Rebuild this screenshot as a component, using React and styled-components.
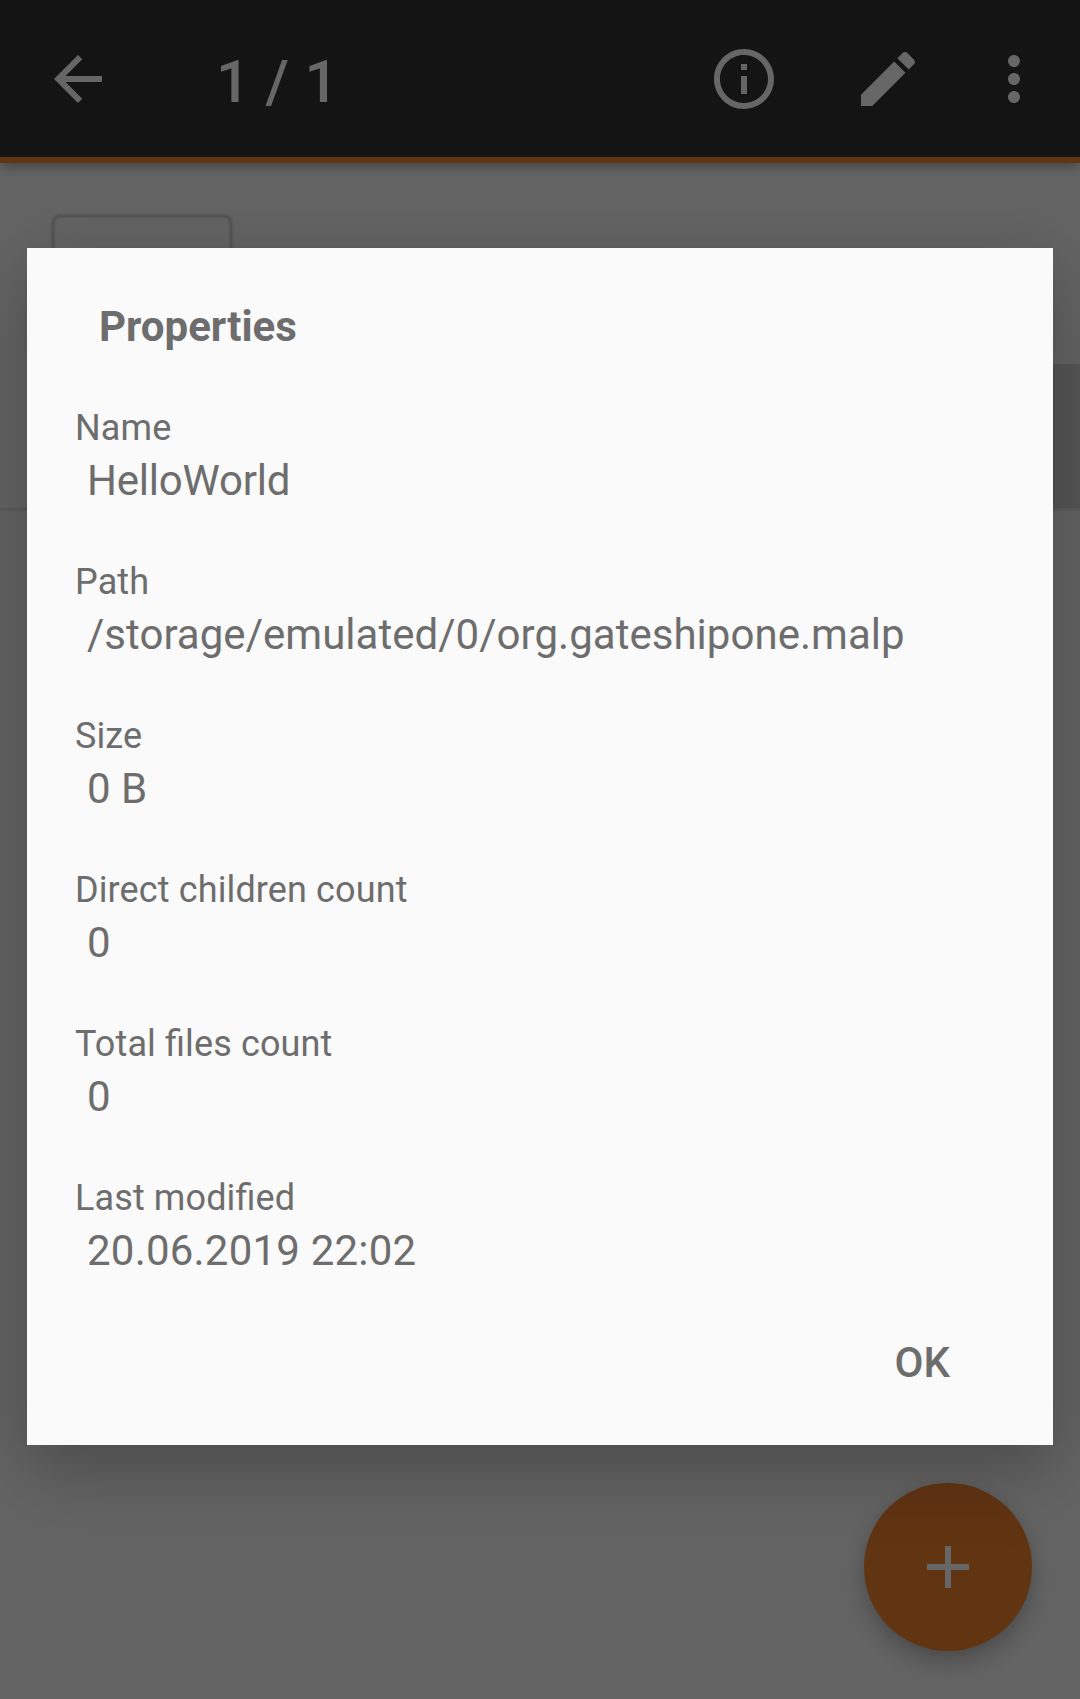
import React from "react";
import styled, { createGlobalStyle } from "styled-components";

const GlobalStyle = createGlobalStyle`
  *, *::before, *::after { box-sizing: border-box; }
  html, body { margin: 0; padding: 0; }
  body { font-family: Roboto, "Noto Sans", sans-serif; overflow: hidden; }
  button { font: inherit; border: 0; padding: 0; background: none; color: inherit; display: flex; }
`;

const Screen = styled.div`
  position: relative;
  width: 1080px;
  height: 1699px;
  background: #fafafa;
  overflow: hidden;
  display: flex;
  flex-direction: column;
`;

const AppBar = styled.header`
  flex: none;
  height: 163px;
  padding: 1px 12px 0 42px;
  display: flex;
  align-items: center;
  background: #323232;
  border-bottom: 6px solid #f2822f;
  box-shadow: 0 4px 12px rgba(0, 0, 0, 0.32);
  color: #fff;
`;

const BarTitle = styled.h1`
  flex: 1;
  margin: 0 0 0 102px;
  font-size: 60px;
  font-weight: 500;
  line-height: 70px;
  letter-spacing: 0.3px;
  padding-top: 5px;
`;

const Actions = styled.nav`
  display: flex;
`;

const ActionButton = styled.button`
  justify-content: center;
  width: ${(p) => p.$width}px;
`;

const Icon = styled.svg`
  display: block;
  flex: none;
  width: 72px;
  height: 72px;
  fill: currentColor;
`;

const FileRow = styled.section`
  flex: none;
  height: 348px;
  padding-left: 52px;
  display: flex;
  justify-content: space-between;
  align-items: flex-end;
  border-bottom: 3px solid #e8e8e8;
`;

const Thumbnail = styled.div`
  align-self: flex-start;
  width: 180px;
  height: 180px;
  margin-top: 52px;
  border: 2px solid #d2d2d2;
  border-radius: 8px;
  box-shadow: 0 0 3px rgba(0, 0, 0, 0.22), inset 0 0 3px rgba(0, 0, 0, 0.2);
`;

const RowAction = styled.div`
  width: 144px;
  height: 144px;
  background: #d6d6d6;
`;

const Fab = styled.button`
  position: absolute;
  right: 48px;
  bottom: 48px;
  width: 168px;
  height: 168px;
  border-radius: 50%;
  align-items: center;
  justify-content: center;
  background: #f2822f;
  color: #fff;
  box-shadow: 0 12px 26px rgba(0, 0, 0, 0.24), 0 0 12px rgba(0, 0, 0, 0.06);
`;

const Scrim = styled.div`
  position: absolute;
  inset: 0;
  padding: 248px 27px 0;
  background: rgba(0, 0, 0, 0.6);
`;

const Dialog = styled.div`
  height: 1197px;
  padding: 64px 48px 0;
  background: #fafafa;
  color: #6d6d6d;
  box-shadow: 0 28px 68px rgba(0, 0, 0, 0.22), 0 0 50px rgba(0, 0, 0, 0.05);
  display: flex;
  flex-direction: column;
`;

const DialogTitle = styled.h2`
  margin: 0 0 0 24px;
  height: 92px;
  font-size: 42px;
  font-weight: 700;
  line-height: 30px;
`;

const Properties = styled.dl`
  margin: 0;
  display: flex;
  flex-direction: column;
  gap: 49px;
`;

const Label = styled.dt`
  font-size: 36px;
  line-height: 48px;
  letter-spacing: 0.12px;
  font-feature-settings: "liga" 1;
`;

const Value = styled.dd`
  margin: 0 0 0 12px;
  padding-top: 1px;
  font-size: 42px;
  line-height: 56px;
  letter-spacing: ${(p) => p.$tracking}px;
  white-space: nowrap;
`;

const DialogActions = styled.div`
  display: flex;
  justify-content: flex-end;
  margin-top: 56px;
  padding-right: 55px;
`;

const DialogButton = styled.button`
  font-size: 42px;
  font-weight: 500;
  line-height: 56px;
`;

const PROPERTIES = [
  { label: "Name", value: "HelloWorld", tracking: -0.2 },
  { label: "Path", value: "/storage/emulated/0/org.gateshipone.malp", tracking: 0.03 },
  { label: "Size", value: "0 B", tracking: 0 },
  { label: "Direct children count", value: "0", tracking: 0 },
  { label: "Total files count", value: "0", tracking: 0 },
  { label: "Last modified", value: "20.06.2019 22:02", tracking: 0.21 },
];

const PATHS = {
  back: "M20 11H7.83l5.59-5.59L12 4l-8 8 8 8 1.41-1.41L7.83 13H20v-2z",
  info: "M11 17h2v-6h-2v6zm1-15C6.48 2 2 6.48 2 12s4.48 10 10 10 10-4.48 10-10S17.52 2 12 2zm0 18c-4.41 0-8-3.59-8-8s3.59-8 8-8 8 3.59 8 8-3.59 8-8 8zM11 9h2V7h-2v2z",
  edit: "M3 17.25V21h3.75L17.81 9.94l-3.75-3.75L3 17.25zM20.71 7.04c.39-.39.39-1.02 0-1.41l-2.34-2.34c-.39-.39-1.02-.39-1.41 0l-1.83 1.83 3.75 3.75 1.83-1.83z",
  more: "M12 8c1.1 0 2-.9 2-2s-.9-2-2-2-2 .9-2 2 .9 2 2 2zm0 2c-1.1 0-2 .9-2 2s.9 2 2 2 2-.9 2-2-.9-2-2-2zm0 6c-1.1 0-2 .9-2 2s.9 2 2 2 2-.9 2-2-.9-2-2-2z",
  add: "M19 13h-6v6h-2v-6H5v-2h6V5h2v6h6v2z",
};

const Glyph = ({ name }) => (
  <Icon viewBox="0 0 24 24" aria-hidden="true">
    <path d={PATHS[name]} />
  </Icon>
);

export default function App() {
  return (
    <>
      <GlobalStyle />
      <Screen>
        <AppBar>
          <ActionButton $width={72} aria-label="Back"><Glyph name="back" /></ActionButton>
          <BarTitle>1 / 1</BarTitle>
          <Actions>
            <ActionButton $width={144} aria-label="Details"><Glyph name="info" /></ActionButton>
            <ActionButton $width={144} aria-label="Edit"><Glyph name="edit" /></ActionButton>
            <ActionButton $width={108} aria-label="More"><Glyph name="more" /></ActionButton>
          </Actions>
        </AppBar>
        <FileRow>
          <Thumbnail />
          <RowAction />
        </FileRow>
        <Fab aria-label="Add"><Glyph name="add" /></Fab>
        <Scrim>
          <Dialog role="dialog">
            <DialogTitle>Properties</DialogTitle>
            <Properties>
              {PROPERTIES.map(({ label, value, tracking }) => (
                <div key={label}>
                  <Label>{label}</Label>
                  <Value $tracking={tracking}>{value}</Value>
                </div>
              ))}
            </Properties>
            <DialogActions>
              <DialogButton>OK</DialogButton>
            </DialogActions>
          </Dialog>
        </Scrim>
      </Screen>
    </>
  );
}
